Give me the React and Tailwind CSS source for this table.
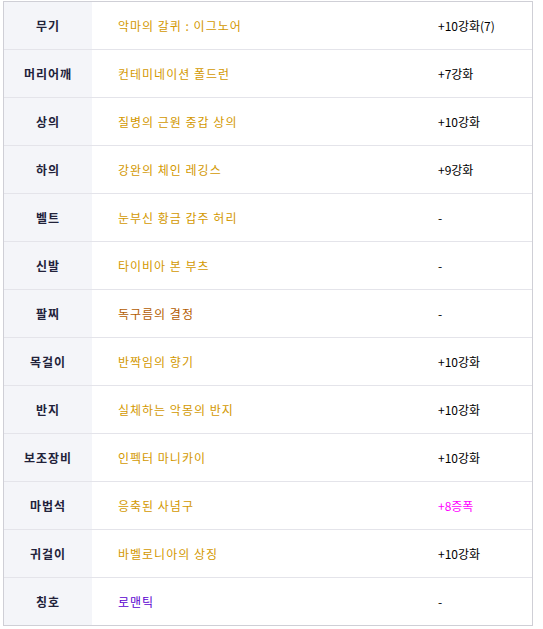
const rows = [
  { label: "무기", name: "악마의 갈퀴 : 이그노어", color: "text-[#d39800]", extra: "+10강화(7)" },
  { label: "머리어깨", name: "컨테미네이션 폴드런", color: "text-[#d39800]", extra: "+7강화" },
  { label: "상의", name: "질병의 근원 중갑 상의", color: "text-[#d39800]", extra: "+10강화" },
  { label: "하의", name: "강완의 체인 레깅스", color: "text-[#d39800]", extra: "+9강화" },
  { label: "벨트", name: "눈부신 황금 갑주 허리", color: "text-[#d39800]", extra: "-" },
  { label: "신발", name: "타이비아 본 부츠", color: "text-[#d39800]", extra: "-" },
  { label: "팔찌", name: "독구름의 결정", color: "text-[#b35c00]", extra: "-" },
  { label: "목걸이", name: "반짝임의 향기", color: "text-[#d39800]", extra: "+10강화" },
  { label: "반지", name: "실체하는 악몽의 반지", color: "text-[#d39800]", extra: "+10강화" },
  { label: "보조장비", name: "인펙터 마니카이", color: "text-[#d39800]", extra: "+10강화" },
  { label: "마법석", name: "응축된 사념구", color: "text-[#d39800]", extra: "+8증폭", extraColor: "text-[#ff00ff]" },
  { label: "귀걸이", name: "바벨로니아의 상징", color: "text-[#d39800]", extra: "+10강화" },
  { label: "칭호", name: "로맨틱", color: "text-[#5a00d0]", extra: "-" },
];

export default function App() {
  return (
    <div className="bg-white min-h-screen pt-[1px] pl-[3px] text-[12px] tracking-[1px] font-['Noto_Sans_CJK_KR','Noto_Sans',sans-serif]">
      <div className="w-[530px] border border-[#cfcfd6]">
        {rows.map((r, i) => (
          <div
            key={r.label}
            className={
              "flex items-center " +
              (i < rows.length - 1 ? "h-[48px] border-b border-[#e4e4ea]" : "h-[47px]")
            }
          >
            <div className="w-[88px] h-full bg-[#f4f5f9] flex items-center justify-center font-bold text-[#22223a]">
              {r.label}
            </div>
            <div className={"w-[320px] pl-[26px] " + r.color}>{r.name}</div>
            <div className={"flex-1 pl-[26px] tracking-normal " + (r.extraColor || "text-black")}>{r.extra}</div>
          </div>
        ))}
      </div>
    </div>
  );
}
